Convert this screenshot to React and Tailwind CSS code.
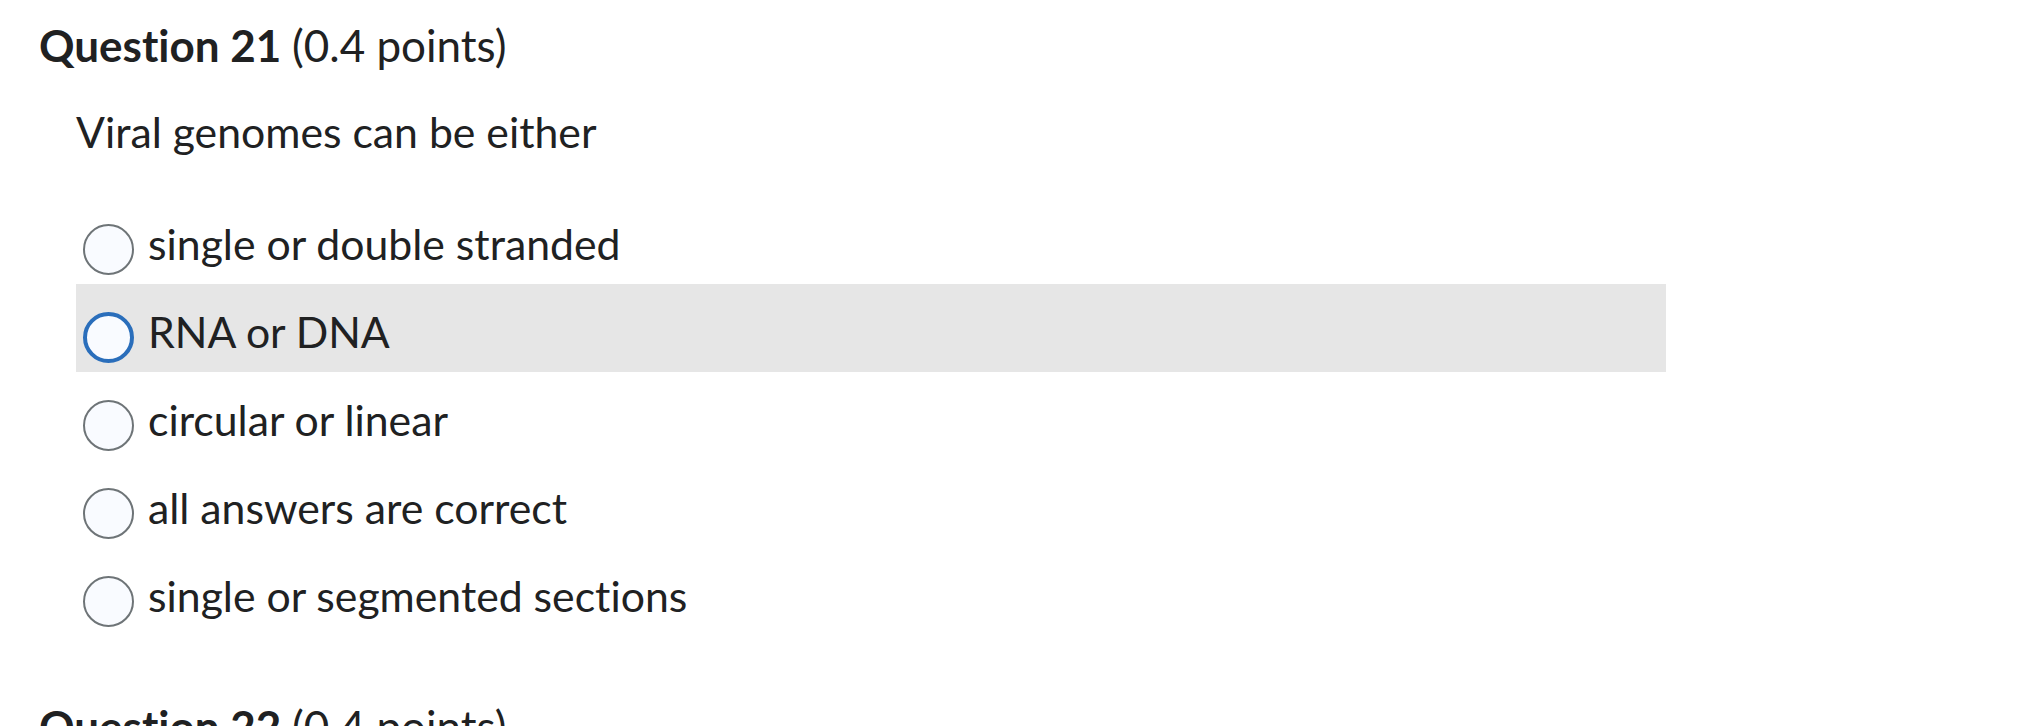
import React from "react";

const options = [
  { label: "single or double stranded", active: false },
  { label: "RNA or DNA", active: true },
  { label: "circular or linear", active: false },
  { label: "all answers are correct", active: false },
  { label: "single or segmented sections", active: false },
];

export default function App() {
  return (
    <div
      className="w-[2024px] h-[726px] overflow-hidden bg-white text-[#202122] pl-[39px] pt-[19px] [font-variant-ligatures:none]"
      style={{ fontFamily: "Lato, 'Noto Sans', sans-serif", fontVariantLigatures: "none" }}
    >
      <h2 className="text-[44px] leading-[52px] font-bold whitespace-nowrap">
        Question 21 <span className="font-normal">(0.4 points)</span>
      </h2>
      <div className="pl-[37px]">
        <p className="mt-[35px] text-[42.75px] leading-[51px]">Viral genomes can be either</p>
        <div className="mt-[39px] w-[1590px] flex flex-col">
          {options.map((o) => (
            <div
              key={o.label}
              className={`h-[88px] flex items-start ${o.active ? "bg-[#e6e6e6]" : ""}`}
            >
              <span
                className={`mt-[28px] ml-[7px] w-[51px] h-[51px] shrink-0 rounded-full bg-[#f9fbff] ${
                  o.active ? "border-[4px] border-[#2a6ebb]" : "border-[2px] border-[#6e7477]"
                }`}
              />
              <span className="mt-[22px] ml-[14px] text-[42.75px] leading-[51px] whitespace-nowrap">
                {o.label}
              </span>
            </div>
          ))}
        </div>
      </div>
      <h2 className="mt-[64px] text-[44px] leading-[52px] font-bold whitespace-nowrap">
        Question 22 <span className="font-normal">(0.4 points)</span>
      </h2>
    </div>
  );
}
